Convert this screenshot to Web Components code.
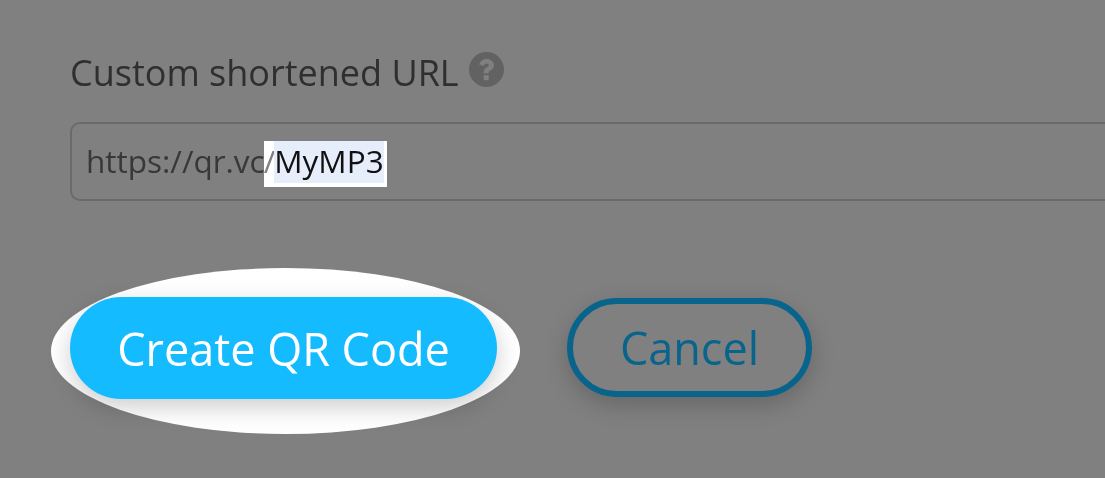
<!DOCTYPE html>
<html>
<head>
<meta charset="utf-8">
<title>Custom shortened URL</title>
<style>
  html, body { margin: 0; height: 100%; }
  body { background: #808080; overflow: hidden; font-family: "Open Sans", sans-serif; }
  qr-form { width: 1105px; height: 478px; }
</style>
</head>
<body>
<qr-form>
  <qr-url-field label="Custom shortened URL" prefix="https://qr.vc" slug="MyMP3"></qr-url-field>
  <qr-actions>
    <qr-button variant="primary" spotlight>Create QR Code</qr-button>
    <qr-button variant="outline">Cancel</qr-button>
  </qr-actions>
</qr-form>

<script>
class QrForm extends HTMLElement {
  constructor() {
    super();
    this.attachShadow({ mode: 'open' });
    this.shadowRoot.innerHTML = `
      <style>
        /* own layer: text is smoothed in greyscale like the reference */
        :host { display: flex; flex-direction: column; box-sizing: border-box; padding: 48px 0 0 70px; overflow: hidden; will-change: transform; }
      </style>
      <slot></slot>
    `;
  }
}

class QrUrlField extends HTMLElement {
  constructor() {
    super();
    this.attachShadow({ mode: 'open' });
    this.shadowRoot.innerHTML = `
      <style>
        :host { display: block; color: #333; }
        .label { display: flex; align-items: flex-start; gap: 10px; height: 74px; font-size: 36px; line-height: 50px; color: #2f2f2f; }
        .help { width: 35px; height: 35px; margin-top: 4px; flex: none; }
        .box {
          box-sizing: border-box; display: flex; align-items: center; height: 79px; width: 1100px;
          border: 2px solid #6a6a6a; border-right: 0; border-radius: 10px 0 0 10px; padding: 0 0 2px 14px;
          font-size: 31.5px; color: #383838; white-space: nowrap;
        }
        .prefix { flex: none; }
        .hl { display: flex; align-items: flex-start; margin-left: -1px; height: 46px; margin-top: 7px; background: #fff; padding-right: 3px; }
        .slash { line-height: 40px; margin-right: -1px; color: #808080; }
        .slug { background: #e6eefc; color: #111; height: 42px; line-height: 40px; }
      </style>
      <div class="label">
        <span></span>
        <svg class="help" viewBox="0 0 35 35" aria-hidden="true">
          <circle cx="17.5" cy="17.5" r="17.5" fill="#626262"/>
          <path d="M10.6 12.6c.7-3.600 3.500-5.400 7-5.400 3.900 0 7 2.500 7 6 0 2.600-1.400 3.900-3.200 5-1.400.9-2 1.400-2 2.900h-4.500c0-3 1-4.300 2.900-5.500 1.300-.8 2.200-1.300 2.200-2.500 0-1.100-1-1.900-2.300-1.900-1.500 0-2.400.8-2.800 2.300z" fill="#808080" stroke="#808080" stroke-width=".6"/>
          <rect x="14.700" y="23.300" width="5" height="5" rx=".5" fill="#808080"/>
        </svg>
      </div>
      <div class="box">
        <span class="prefix"></span>
        <span class="hl"><span class="slash">/</span><span class="slug"></span></span>
      </div>
    `;
  }

  connectedCallback() {
    const root = this.shadowRoot;
    root.querySelector('.label span').textContent = this.getAttribute('label');
    root.querySelector('.prefix').textContent = this.getAttribute('prefix');
    root.querySelector('.slug').textContent = this.getAttribute('slug');
  }
}

class QrActions extends HTMLElement {
  constructor() {
    super();
    this.attachShadow({ mode: 'open' });
    this.shadowRoot.innerHTML = `
      <style>
        :host { display: flex; align-items: flex-start; gap: 70px; margin-top: 96px; }
      </style>
      <slot></slot>
    `;
  }
}

class QrButton extends HTMLElement {
  constructor() {
    super();
    this.attachShadow({ mode: 'open' });
    this.shadowRoot.innerHTML = `
      <style>
        :host { display: block; position: relative; font-size: 45px; }
        :host([variant="outline"]) { margin-top: 1px; }
        button {
          position: relative; display: block; box-sizing: border-box; font: inherit; cursor: pointer; white-space: nowrap;
          border-radius: 52px; background: transparent;
        }
        :host([variant="primary"]) button {
          width: 427px; height: 102px; border: 0; background: #15bbff; color: #fff;
          box-shadow: 0 8px 24px rgba(0,0,0,.2);
        }
        :host([variant="outline"]) button {
          width: 245px; height: 99px; border: 6px solid #09648b; color: #09648b;
          box-shadow: 0 8px 24px rgba(0,0,0,.2);
        }
        .spot { display: none; position: absolute; left: -19px; top: -29px; width: 469px; height: 166px; border-radius: 50%; background: #fff; overflow: hidden; }
        :host([spotlight]) .spot { display: block; }
      </style>
      <div class="spot"></div>
      <button type="button"><slot></slot></button>
    `;
  }
}

customElements.define('qr-form', QrForm);
customElements.define('qr-url-field', QrUrlField);
customElements.define('qr-actions', QrActions);
customElements.define('qr-button', QrButton);
</script>
</body>
</html>
